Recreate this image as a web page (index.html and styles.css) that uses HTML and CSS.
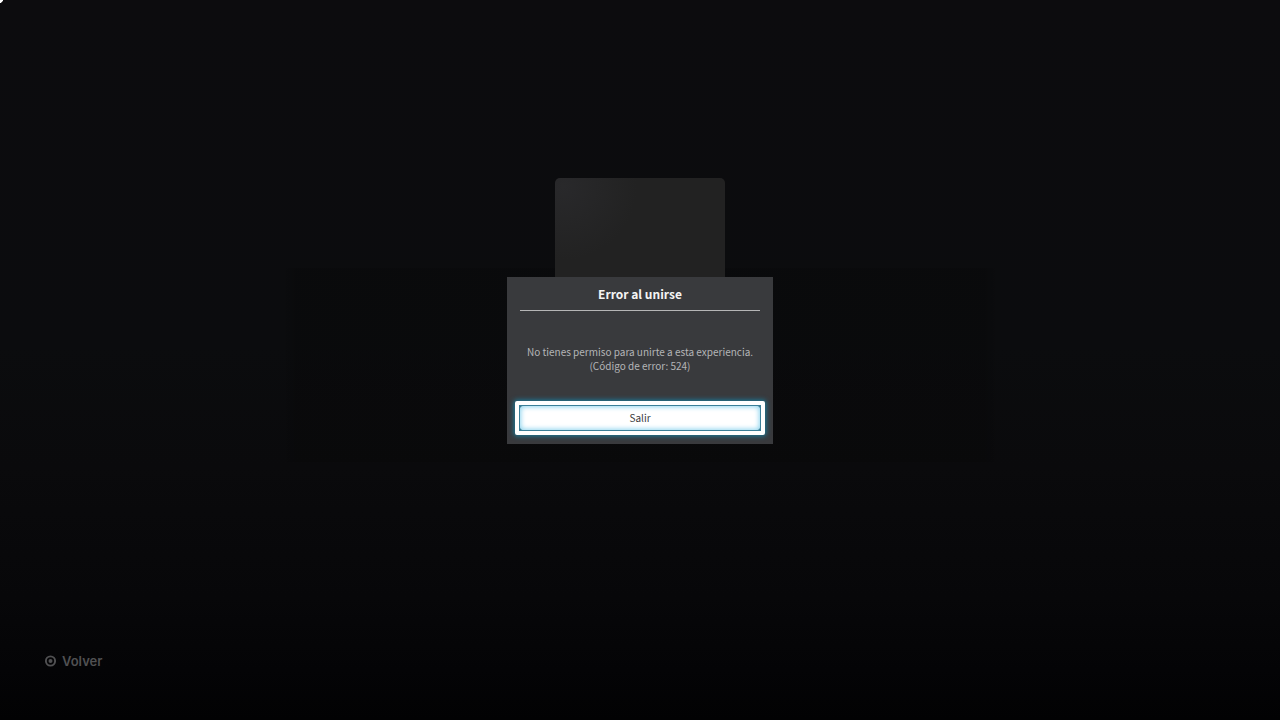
FILE: index.html
```html
<!DOCTYPE html>
<html lang="es">
<head>
<meta charset="utf-8">
<meta name="viewport" content="width=device-width, initial-scale=1">
<title>Error al unirse</title>
<link rel="stylesheet" href="styles.css">
</head>
<body>
<span class="pointer"></span>
<main class="stage">
  <div class="thumb"></div>
  <section class="dialog" role="alertdialog" aria-labelledby="title" aria-describedby="message">
    <h1 class="title" id="title">Error al unirse</h1>
    <p class="message" id="message">No tienes permiso para unirte a esta experiencia.<br>(Código de error: 524)</p>
    <button class="leave" type="button"><span class="leave-face">Salir</span></button>
  </section>
</main>
<footer class="footer">
  <button class="back" type="button">
    <svg class="back-icon" viewBox="0 0 12 12" aria-hidden="true">
      <circle cx="6.5" cy="6" r="4.6" fill="none" stroke="currentColor" stroke-width="1.9"/>
      <circle cx="6.5" cy="6" r="2" fill="currentColor"/>
    </svg>
    <span>Volver</span>
  </button>
</footer>
</body>
</html>
```
FILE: styles.css
```css
* {
  box-sizing: border-box;
}

body {
  margin: 0;
  min-height: 100vh;
  display: grid;
  color: #fff;
  font-family: "Noto Sans CJK SC", "Noto Sans", sans-serif;
  background: linear-gradient(#0c0c0e 0%, #0b0c0e 48%, #0a0a0c 65%, #070709 83%, #040406 93%, #020203 100%);
}

.pointer {
  position: absolute;
  top: 0;
  left: 0;
  width: 3px;
  height: 3px;
  background: linear-gradient(135deg, #fff 50%, transparent 75%);
}

.stage,
.footer {
  grid-area: 1 / 1;
}

.stage {
  display: grid;
  place-items: center;
  background: linear-gradient(90deg, transparent, rgba(0, 0, 0, 0.15) 2%, rgba(0, 0, 0, 0.15) 98%, transparent) center 51% / 56% 27% no-repeat;
}

.thumb,
.dialog {
  grid-area: 1 / 1;
}

.thumb {
  width: 170px;
  height: 171px;
  margin-bottom: 193px;
  border-radius: 5px;
  background: radial-gradient(circle at 5% 5%, #29292b, #222 32%);
}

.dialog {
  z-index: 1;
  width: 266px;
  padding: 0 8px 9px;
  display: flex;
  flex-direction: column;
  background: #393a3d;
  text-align: center;
}

.title {
  margin: 0 5px;
  height: 34px;
  font-size: 12px;
  font-weight: 700;
  line-height: 33px;
  color: #f4f4f4;
  border-bottom: 1px solid #b5b5b6;
}

.message {
  margin: 34px 0 28px;
  font-size: 10px;
  line-height: 14px;
  color: #b4b5b7;
}

.leave {
  height: 34px;
  padding: 0;
  display: grid;
  border: 4px solid #fff;
  border-radius: 2px;
  background: #3a7f98;
  color: #393b3d;
  font: inherit;
  font-size: 10px;
  line-height: 24px;
  box-shadow: 0 0 5px 1px #197fa0;
}

.leave-face {
  margin: 1px;
  border-radius: 4px;
  background: #fff;
  box-shadow: inset 0 0 5px 1px #8fd5ef;
}

.footer {
  align-self: end;
  justify-self: start;
  padding: 0 0 49px 44px;
}

.back {
  display: flex;
  align-items: center;
  gap: 6px;
  padding: 0;
  border: 0;
  background: none;
  color: #505052;
  font: 600 13px/20px Inter, sans-serif;
}

.back-icon {
  width: 12px;
  height: 12px;
}
```
